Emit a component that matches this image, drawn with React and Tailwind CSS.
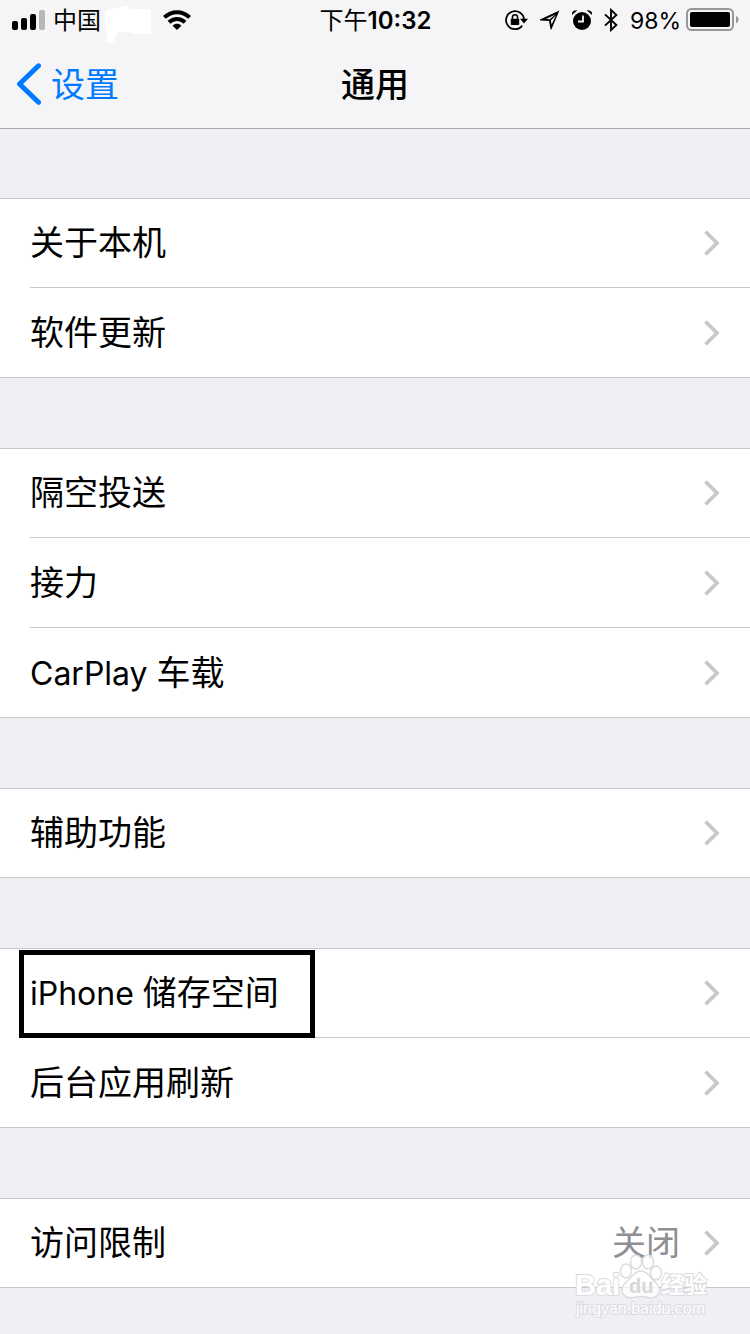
import React from 'react';

const groups = [
  [{ label: '关于本机' }, { label: '软件更新' }],
  [{ label: '隔空投送' }, { label: '接力' }, { latin: 'CarPlay', label: '车载' }],
  [{ label: '辅助功能' }],
  [{ latin: 'iPhone', label: '储存空间', marked: true }, { label: '后台应用刷新' }],
  [{ label: '访问限制', value: '关闭' }],
];

const SignalIcon = () => (
  <svg width="33" height="20" viewBox="0 0 33 20" aria-hidden="true">
    <rect x="0" y="11" width="6" height="9" rx="2" />
    <rect x="9" y="8" width="6" height="12" rx="2" />
    <rect x="18" y="4" width="6" height="16" rx="2" />
    <rect x="27" y="0" width="6" height="20" rx="2" fill="#b8b8ba" />
  </svg>
);

// white scribble that hides the carrier name
const Scribble = () => (
  <svg width="46" height="38" viewBox="0 0 46 38" fill="#fff" aria-hidden="true">
    <path d="M0 6 L4 3 L16 2 L17 0 H24 V3 H45 L46 4 V28 H31 L24 26 L12 27 L10 31 V37 H2 V26 L0 24 Z" />
  </svg>
);

const WifiIcon = () => (
  <svg width="28" height="20" viewBox="0 0 28 20" fill="none" stroke="#000" strokeWidth="4" aria-hidden="true">
    <path d="M1.4 7.4 C8.5 0.4 19.5 0.4 26.6 7.4" />
    <path d="M6 12.2 C10.6 7.8 17.4 7.8 22 12.2" />
    <path d="M9.6 15.8 C12.2 13.2 15.8 13.2 18.4 15.8 L14 20 Z" fill="#000" stroke="none" />
  </svg>
);

const RotationLockIcon = () => (
  <svg width="23" height="20" viewBox="0 0 23 20" fill="none" stroke="#000" strokeWidth="1.8" aria-hidden="true">
    <path d="M17.2 15.6 A9 9 0 1 1 19 9.4" />
    <path d="M15 8.8 H23 L19 13.4 Z" fill="#000" stroke="none" />
    <rect x="5.8" y="8.8" width="8.4" height="6.2" rx="0.8" fill="#000" stroke="none" />
    <path d="M7.4 9.4 V7.4 A2.6 2.6 0 0 1 12.6 7.4 V9.4" strokeWidth="1.5" />
  </svg>
);

const LocationIcon = () => (
  <svg width="20" height="20" viewBox="0 0 20 20" aria-hidden="true">
    <path
      fillRule="evenodd"
      d="M19.4 0.6 L0 9.6 V10.4 L9 11 L10.6 19.6 H11.4 Z M15.4 4.4 L9.6 9.2 L6 9 Z M16 5.2 L11.6 14.4 L10.8 10.6 Z"
    />
  </svg>
);

const AlarmIcon = () => (
  <svg width="20" height="20" viewBox="0 0 20 20" aria-hidden="true">
    <circle cx="10" cy="11" r="9" />
    <path d="M0 5 V3 C0.6 1 2.4 0.2 5.2 0.4 Z" />
    <path d="M20 5 V3 C19.4 1 17.6 0.2 14.8 0.4 Z" />
    <path d="M11 5.5 V11.5 H6" fill="none" stroke="#f5f5f7" strokeWidth="1.8" />
  </svg>
);

const BluetoothIcon = () => (
  <svg width="14" height="24" viewBox="0 0 14 24" fill="none" stroke="#000" strokeWidth="1.9" aria-hidden="true">
    <path d="M1 6.4 L12.4 17 L7 22 V2 L12.4 7 L1 17.6" />
  </svg>
);

const BatteryIcon = () => (
  <svg width="53" height="24" viewBox="0 0 53 24" aria-hidden="true">
    <rect x="1" y="1" width="46" height="21" rx="4.5" fill="none" stroke="#97979a" strokeWidth="2" />
    <rect x="4" y="4" width="40" height="15" rx="2" />
    <path d="M50 8 C53.4 8.6 53.4 14.6 50 15.2 Z" fill="#97979a" />
  </svg>
);

const Chevron = () => (
  <svg width="16" height="26" viewBox="0 0 16 26" fill="none" stroke="#c7c7cc" strokeWidth="3.6" aria-hidden="true">
    <path d="M1.5 1.6 L13 13 L1.5 24.4" />
  </svg>
);

const StatusBar = () => (
  <div className="grid h-10 grid-cols-[1fr_auto_1fr] items-center pl-3 pr-[11px] text-2xl leading-9">
    <div className="flex items-center gap-2">
      <SignalIcon />
      <span className="pt-0.5">中国</span>
      <div className="-mb-1 -ml-1 mt-1.5">
        <Scribble />
      </div>
      <div className="ml-1">
        <WifiIcon />
      </div>
    </div>
    <time className="pt-0.5 font-semibold">
      <span className="font-normal">下午</span>10:32
    </time>
    <div className="flex items-center justify-end gap-3">
      <RotationLockIcon />
      <LocationIcon />
      <AlarmIcon />
      <BluetoothIcon />
      <div className="flex items-center gap-[5px]">
        <span className="pt-0.5 text-[23px]">98%</span>
        <BatteryIcon />
      </div>
    </div>
  </div>
);

const NavBar = () => (
  <nav className="grid h-[88px] grid-cols-[1fr_auto_1fr] items-center px-4">
    <a href="#settings" className="flex items-center gap-2.5 text-[34px] leading-none text-[#007aff]">
      <svg width="25" height="42" viewBox="0 0 25 42" fill="none" stroke="#007aff" strokeWidth="5" strokeLinecap="round" aria-hidden="true">
        <path d="M22.5 2.8 L3.5 21 L22.5 39.2" strokeLinejoin="round" />
      </svg>
      <span className="pt-0.5">设置</span>
    </a>
    <h1 className="pt-0.5 text-[34px] font-medium leading-none">通用</h1>
  </nav>
);

const Row = ({ latin, label, value, marked }) => (
  <li className="group relative flex h-[90px] border-[#c8c7cc] bg-white pl-[30px] first:border-t last:border-b">
    <a
      href="#item"
      className="flex flex-1 items-center justify-between border-b border-[#c8c7cc] pr-[30px] group-last:border-b-0"
    >
      <span>
        {latin && <span className="text-[32px]">{latin} </span>}
        {label}
      </span>
      <span className="flex items-center gap-6 text-[#8e8e93]">
        {value}
        <Chevron />
      </span>
    </a>
    {marked && <div className="absolute left-[19px] top-px h-[88px] w-[296px] border-[5px] border-black" />}
  </li>
);

const Watermark = () => (
  <div className="absolute right-[41px] top-14 font-['Liberation_Sans','Noto_Sans_CJK_SC',sans-serif] leading-none" aria-hidden="true">
    <svg width="134" height="66" viewBox="0 0 134 66" fill="#fff" fillOpacity="0.75" stroke="#dcdce0" strokeWidth="1.4">
      <ellipse cx="51" cy="17" rx="5.5" ry="7" />
      <ellipse cx="61" cy="8" rx="5.5" ry="7" />
      <ellipse cx="73" cy="8" rx="5.5" ry="7" />
      <ellipse cx="81" cy="19" rx="5.5" ry="7" />
      <path d="M66 17 C73 17 75 24 81 29 C88 36 84 44 75 44 C69 42 63 42 57 44 C48 44 44 36 50 29 C57 24 59 17 66 17 Z" />
      <g fontWeight="bold">
        <text x="0" y="41" fontSize="29" strokeWidth="2" paintOrder="stroke" fillOpacity="1">Bai</text>
        <text x="54" y="39" fontSize="20" fill="#d6d6da" stroke="none" fillOpacity="1">du</text>
        <text x="86" y="39" fontSize="23" strokeWidth="2" paintOrder="stroke" fillOpacity="1">经验</text>
      </g>
      <text x="1" y="60" fontSize="16" strokeWidth="2" paintOrder="stroke" fillOpacity="1">jingyan.baidu.com</text>
    </svg>
  </div>
);

const App = () => {
  return (
    <div className="min-h-screen bg-[#efeff4] font-[Inter,'Noto_Sans_CJK_SC',sans-serif] text-black">
      <header className="border-b border-[#a7a7ac] bg-[#f5f5f7]">
        <StatusBar />
        <NavBar />
      </header>
      <main className="flex flex-col gap-[70px] pt-[69px] text-[34px] leading-none">
        {groups.map((rows, index) => (
          <div key={index} className="relative">
            <ul>
              {rows.map((row) => (
                <Row key={row.label} {...row} />
              ))}
            </ul>
            {index === groups.length - 1 && <Watermark />}
          </div>
        ))}
      </main>
    </div>
  );
};

export default App;
